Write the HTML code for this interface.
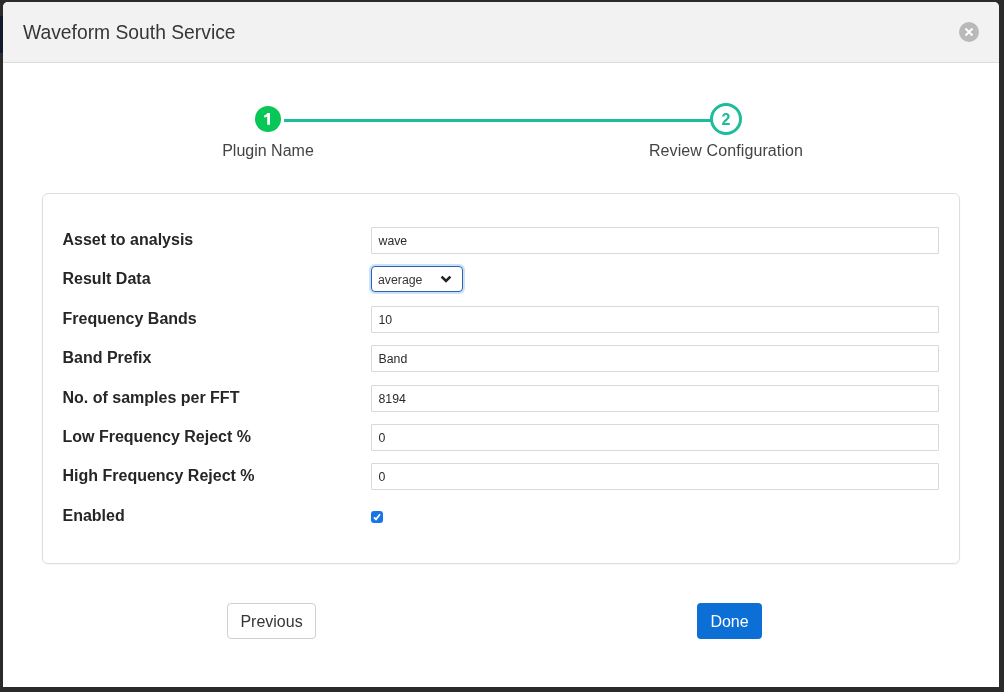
<!DOCTYPE html>
<html>
<head>
<meta charset="utf-8">
<style>
html,body{margin:0;padding:0;}
svg{display:block;}
body{width:1004px;height:692px;background:#2b2b2b;position:relative;overflow:hidden;font-family:"Liberation Sans",sans-serif;}
.navy{position:absolute;left:0;top:16px;width:3px;height:37px;background:#0f1b2b;}
.modal{position:absolute;left:3px;top:2px;width:996px;height:685px;background:#fff;border-radius:5px 5px 0 0;overflow:hidden;will-change:transform;}
.hdr{position:absolute;left:0;top:0;width:996px;height:60px;background:#f2f2f2;border-bottom:1px solid #dcdcdc;}
.title{position:absolute;left:20px;top:20px;font-size:19.3px;line-height:22px;color:#363636;white-space:nowrap;}
.close{position:absolute;left:956px;top:20px;width:20px;height:20px;border-radius:50%;background:#b9b9b9;}
.stepline{position:absolute;left:281px;top:117px;width:427px;height:3px;background:#1cbc9c;}
.s1{position:absolute;left:252px;top:104px;width:26px;height:26px;border-radius:50%;background:#08c757;color:#fff;font-weight:bold;font-size:16px;line-height:26px;text-align:center;}
.s2{position:absolute;left:707px;top:101px;width:26px;height:26px;border-radius:50%;border:3px solid #1cbc9c;background:#fff;color:#1cbc9c;font-weight:bold;font-size:16px;line-height:28px;text-align:center;}
.slbl{position:absolute;font-size:16px;line-height:20px;color:#444;white-space:nowrap;}
.panel{position:absolute;left:39px;top:191px;width:916px;height:369px;border:1px solid #dedede;border-radius:6px;box-shadow:0 1px 2px rgba(0,0,0,0.04);}
.lbl{position:absolute;left:59.5px;font-size:16px;font-weight:bold;color:#262626;line-height:22px;white-space:nowrap;}
.inp{position:absolute;left:368px;width:566px;height:25px;border:1px solid #d9d9d9;border-radius:1px;background:#fff;font-size:12.3px;color:#2a2a2a;line-height:25px;box-sizing:content-box;}
.inp span{position:absolute;left:6.5px;top:1px;}
.sel{position:absolute;left:368px;top:264px;width:90px;height:24px;border:1px solid #2d63a6;border-radius:4px;box-shadow:0 0 0 2px #c8e2fc;background:#fff;font-size:12.3px;color:#363636;line-height:24px;}
.sel span{position:absolute;left:6px;top:1px;}
.chk{position:absolute;left:368px;top:509px;width:12px;height:12px;border-radius:3px;background:#1775e5;}
.btn{position:absolute;top:601px;height:34px;border-radius:4px;font-size:16px;line-height:36px;text-align:center;}
.prev{left:224px;width:87px;border:1px solid #d0d0d0;color:#363636;background:#fff;}
.done{left:694px;width:65px;height:36px;line-height:38px;background:#0b6fd6;color:#fff;}
</style>
</head>
<body>
<div class="navy"></div>
<div class="modal">
  <div class="hdr">
    <div class="title">Waveform South Service</div>
    <div class="close"><svg width="20" height="20" viewBox="0 0 20 20"><path d="M6.5 6.5L13.5 13.5M13.5 6.5L6.5 13.5" stroke="#fff" stroke-width="1.9" stroke-linecap="butt"/></svg></div>
  </div>

  <div class="stepline"></div>
  <div class="s1"><svg style="position:absolute;left:0;top:0" width="26" height="26" viewBox="0 0 26 26"><path d="M12.2 7H15V18.8H12.2V10.4C11.4 11 10.3 11.3 9.2 11.4V9.3C10.6 9.1 11.7 8.3 12.2 7Z" fill="#fff"/></svg></div>
  <div class="s2">2</div>
  <div class="slbl" style="left:165px;width:200px;text-align:center;top:139px;">Plugin Name</div>
  <div class="slbl" style="left:623px;width:200px;text-align:center;top:139px;letter-spacing:0.1px;">Review Configuration</div>

  <div class="panel"></div>

  <div class="lbl" style="top:227px;">Asset to analysis</div>
  <div class="inp" style="top:225px;"><span>wave</span></div>

  <div class="lbl" style="top:266px;">Result Data</div>
  <div class="sel"><span>average</span><svg style="position:absolute;left:68px;top:8px" width="12" height="9" viewBox="0 0 12 9"><path d="M1.6 1.6L6 6L10.4 1.6" fill="none" stroke="#222" stroke-width="2.6"/></svg></div>

  <div class="lbl" style="top:306px;">Frequency Bands</div>
  <div class="inp" style="top:304px;"><span>10</span></div>

  <div class="lbl" style="top:345px;">Band Prefix</div>
  <div class="inp" style="top:343px;"><span>Band</span></div>

  <div class="lbl" style="top:385px;">No. of samples per FFT</div>
  <div class="inp" style="top:383px;"><span>8194</span></div>

  <div class="lbl" style="top:424px;">Low Frequency Reject %</div>
  <div class="inp" style="top:422px;"><span>0</span></div>

  <div class="lbl" style="top:463px;">High Frequency Reject %</div>
  <div class="inp" style="top:461px;"><span>0</span></div>

  <div class="lbl" style="top:503px;">Enabled</div>
  <div class="chk"><svg width="12" height="12" viewBox="0 0 12 12"><path d="M3 6.3L5 8.3L9 3.3" fill="none" stroke="#fff" stroke-width="1.8"/></svg></div>

  <div class="btn prev">Previous</div>
  <div class="btn done">Done</div>
</div>
</body>
</html>
